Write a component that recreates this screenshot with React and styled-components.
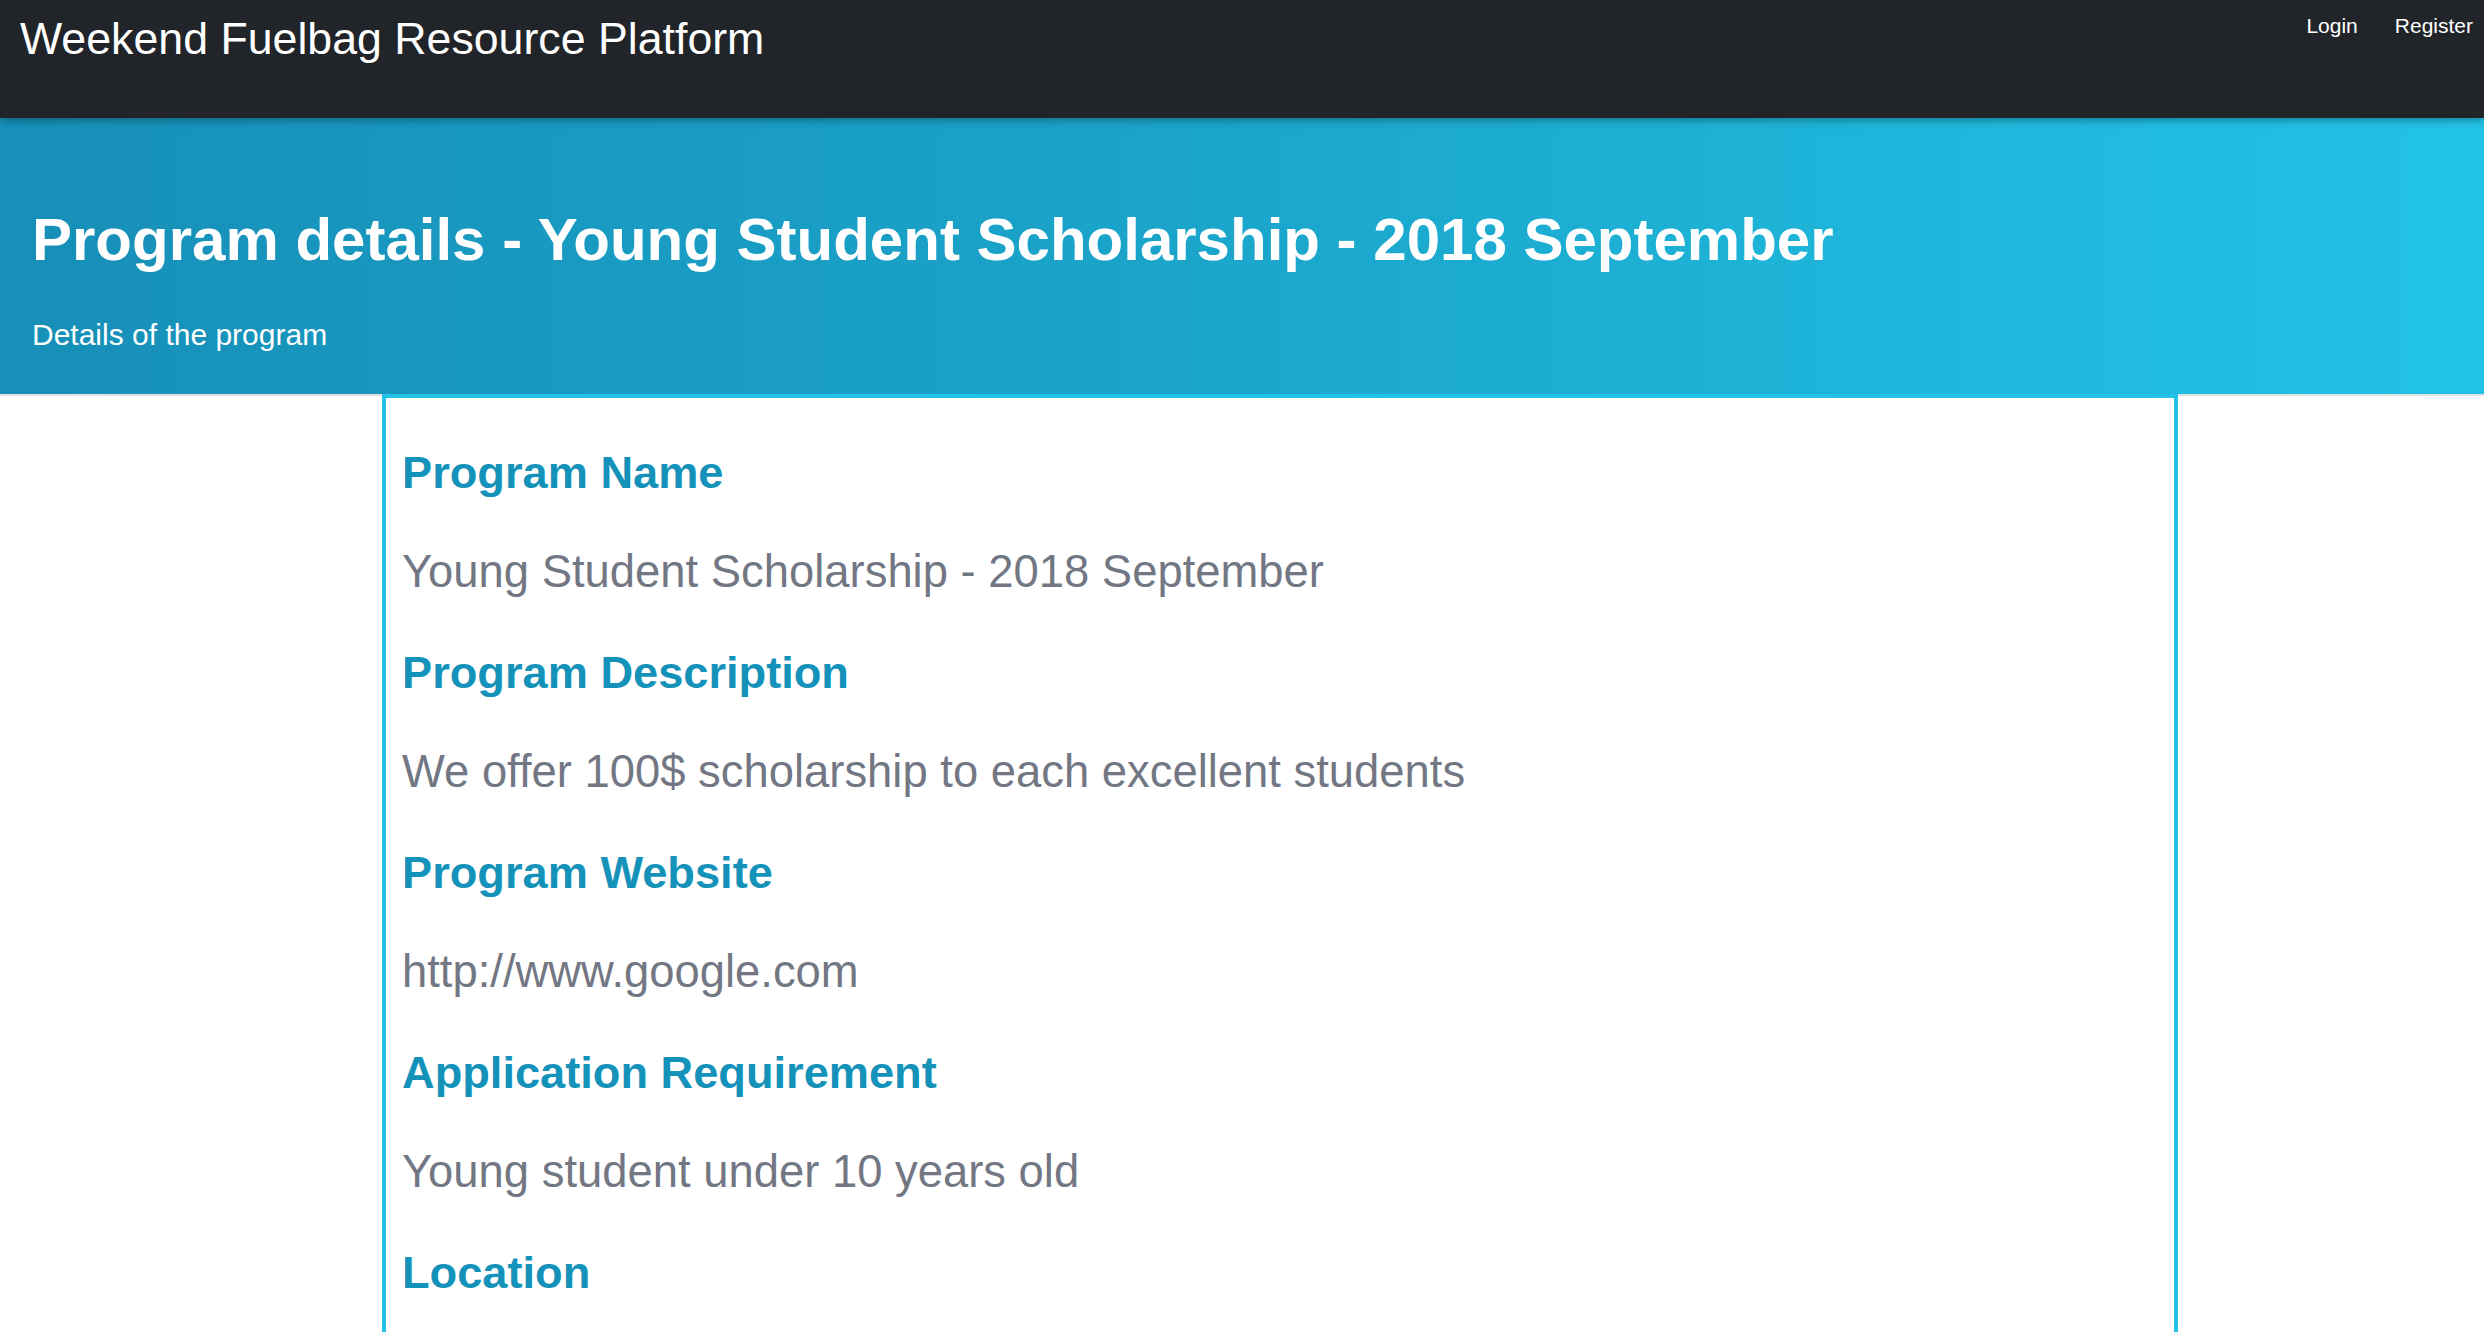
import React from "react";
import styled, { createGlobalStyle } from "styled-components";

const GlobalStyle = createGlobalStyle`
  html, body {
    margin: 0;
    padding: 0;
    background: #ffffff;
  }
  body {
    font-family: "Liberation Sans", Arial, Helvetica, sans-serif;
    -webkit-font-smoothing: antialiased;
  }
  * { box-sizing: border-box; }
`;

const Navbar = styled.nav`
  position: relative;
  z-index: 2;
  height: 118px;
  background: #212529;
  display: flex;
  justify-content: space-between;
  align-items: flex-start;
  box-shadow: 0 2px 8px rgba(0, 0, 0, 0.35);
`;

const Brand = styled.a`
  display: block;
  padding: 17px 0 0 20px;
  font-size: 44.7px;
  line-height: 1;
  color: #ffffff;
  text-decoration: none;
`;

const NavLinks = styled.div`
  display: flex;
  gap: 37px;
  padding: 15px 11px 0 0;
`;

const NavLink = styled.a`
  font-size: 21px;
  line-height: 1;
  color: #ffffff;
  text-decoration: none;
`;

const Hero = styled.header`
  height: 278px;
  padding: 92px 0 0 32px;
  background: linear-gradient(to right, #178fb8 0%, #1ba6cc 50%, #22c3e6 100%);
  border-bottom: 2px solid #dee2e6;
`;

const HeroTitle = styled.h1`
  margin: 0;
  font-size: 60px;
  line-height: 1;
  font-weight: 700;
  color: #ffffff;
`;

const HeroSubtitle = styled.p`
  margin: 50px 0 0;
  font-size: 30px;
  line-height: 1;
  color: #ffffff;
`;

const Card = styled.section`
  margin: -2px 0 0 382px;
  width: 1796px;
  min-height: 1000px;
  padding: 48px 16px;
  background: #ffffff;
  border: 4px solid #22c3e6;
`;

const FieldLabel = styled.h3`
  margin: 0 0 45px;
  font-size: 45.2px;
  line-height: 54px;
  font-weight: 700;
  color: #1492ba;
`;

const FieldValue = styled.p`
  margin: 0 0 47px;
  font-size: 45.4px;
  line-height: 54px;
  color: #737784;
`;

const fields = [
  { label: "Program Name", value: "Young Student Scholarship - 2018 September" },
  { label: "Program Description", value: "We offer 100$ scholarship to each excellent students" },
  { label: "Program Website", value: "http://www.google.com" },
  { label: "Application Requirement", value: "Young student under 10 years old" },
  { label: "Location", value: "" },
];

export default function App() {
  return (
    <>
      <GlobalStyle />
      <Navbar>
        <Brand href="#">Weekend Fuelbag Resource Platform</Brand>
        <NavLinks>
          <NavLink href="#">Login</NavLink>
          <NavLink href="#">Register</NavLink>
        </NavLinks>
      </Navbar>
      <Hero>
        <HeroTitle>Program details - Young Student Scholarship - 2018 September</HeroTitle>
        <HeroSubtitle>Details of the program</HeroSubtitle>
      </Hero>
      <Card>
        {fields.map((f) => (
          <React.Fragment key={f.label}>
            <FieldLabel>{f.label}</FieldLabel>
            {f.value && <FieldValue>{f.value}</FieldValue>}
          </React.Fragment>
        ))}
      </Card>
    </>
  );
}
